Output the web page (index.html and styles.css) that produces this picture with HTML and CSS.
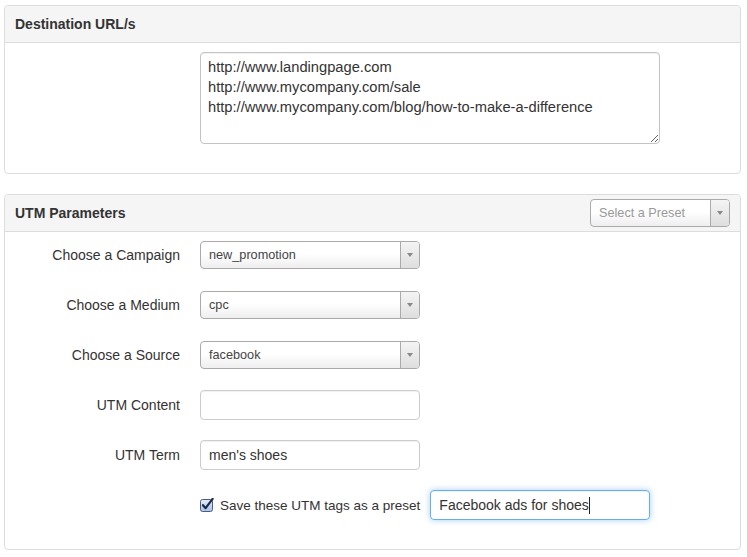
FILE: index.html
```html
<!DOCTYPE html>
<html>
<head>
<meta charset="utf-8">
<link rel="stylesheet" href="styles.css">
</head>
<body>
<div class="page">
  <section class="panel">
    <div class="panel-head">
      <h3 class="panel-title">Destination URL/s</h3>
    </div>
    <div class="panel-body body-urls">
      <div class="row">
        <div class="label"></div>
        <textarea class="urls">http://www.landingpage.com
http://www.mycompany.com/sale
http://www.mycompany.com/blog/how-to-make-a-difference</textarea>
      </div>
    </div>
  </section>

  <section class="panel">
    <div class="panel-head">
      <h3 class="panel-title">UTM Parameters</h3>
      <div class="sel sel-preset">
        <span class="sel-text placeholder">Select a Preset</span>
        <span class="sel-arrow"><span class="tri"></span></span>
      </div>
    </div>
    <div class="panel-body body-utm">
      <div class="row">
        <label class="label">Choose a Campaign</label>
        <div class="sel"><span class="sel-text">new_promotion</span><span class="sel-arrow"><span class="tri"></span></span></div>
      </div>
      <div class="row">
        <label class="label">Choose a Medium</label>
        <div class="sel"><span class="sel-text">cpc</span><span class="sel-arrow"><span class="tri"></span></span></div>
      </div>
      <div class="row">
        <label class="label">Choose a Source</label>
        <div class="sel"><span class="sel-text">facebook</span><span class="sel-arrow"><span class="tri"></span></span></div>
      </div>
      <div class="row">
        <label class="label">UTM Content</label>
        <input class="field" type="text" value="">
      </div>
      <div class="row">
        <label class="label">UTM Term</label>
        <input class="field" type="text" value="men's shoes">
      </div>
      <div class="row">
        <div class="label"></div>
        <div class="save-line">
          <span class="check">
            <svg width="14" height="14" viewBox="0 0 14 14">
              <defs>
                <linearGradient id="cb" x1="0" y1="0" x2="0" y2="1">
                  <stop offset="0" stop-color="#e6eefb"/>
                  <stop offset="1" stop-color="#a9c1e8"/>
                </linearGradient>
              </defs>
              <rect x="0.5" y="1.5" width="12" height="12" rx="2" fill="url(#cb)" stroke="#4a5d80"/>
              <path d="M3 7.2 L5.6 10.2 L12.6 0.8" fill="none" stroke="#1b2a4a" stroke-width="2.2" stroke-linecap="round" stroke-linejoin="round"/>
            </svg>
          </span>
          <span class="save-text">Save these UTM tags as a preset</span>
          <div class="field focused">Facebook ads for shoes<span class="caret"></span></div>
        </div>
      </div>
    </div>
  </section>
</div>
</body>
</html>
```

FILE: styles.css
```css
html, body {
  margin: 0;
  padding: 0;
  background: #fff;
}

body {
  font-family: "Liberation Sans", Arial, Helvetica, sans-serif;
  color: #333;
}

.page {
  padding: 5px 6px 0 4px;
}

.panel {
  border: 1px solid #ddd;
  border-radius: 4px;
  margin-bottom: 20px;
  background: #fff;
}

.panel-head {
  height: 36px;
  background: #f5f5f5;
  border-bottom: 1px solid #ddd;
  border-radius: 4px 4px 0 0;
  display: flex;
  align-items: center;
  justify-content: space-between;
  padding: 0 10px;
}

.panel-title {
  margin: 0;
  font-size: 14px;
  font-weight: bold;
  color: #333;
}

.body-urls {
  padding: 9px 15px 29px 15px;
}

.body-utm {
  padding: 8px 15px 29px 15px;
  display: flex;
  flex-direction: column;
  gap: 20px;
}

.row {
  display: grid;
  grid-template-columns: 160px auto;
  column-gap: 20px;
  align-items: center;
  justify-content: start;
  min-height: 30px;
}

.label {
  text-align: right;
  font-size: 14px;
  color: #333;
}

.urls {
  display: block;
  box-sizing: border-box;
  width: 460px;
  height: 92px;
  margin: 0;
  padding: 4px 7px;
  border: 1px solid #c4c4c4;
  border-radius: 4px;
  font-family: "Liberation Sans", Arial, sans-serif;
  font-size: 14.7px;
  line-height: 20px;
  color: #333;
  box-shadow: inset 0 1px 1px rgba(0,0,0,0.06);
  outline: none;
}

.sel {
  box-sizing: border-box;
  width: 220px;
  height: 28px;
  display: flex;
  border: 1px solid #aaa;
  border-radius: 4px;
  background: linear-gradient(#ffffff 0%, #ffffff 45%, #eeeeee 100%);
  font-size: 12.7px;
  color: #444;
  overflow: hidden;
}

.sel-preset {
  width: 140px;
}

.sel-text {
  flex: 1;
  padding-left: 8px;
  line-height: 26px;
  white-space: nowrap;
}

.placeholder {
  color: #999;
}

.sel-arrow {
  width: 18px;
  border-left: 1px solid #aaa;
  background: linear-gradient(#f4f4f4, #dedede);
  display: flex;
  align-items: center;
  justify-content: center;
}

.tri {
  width: 0;
  height: 0;
  border-left: 3px solid transparent;
  border-right: 3px solid transparent;
  border-top: 4px solid #888;
}

.field {
  box-sizing: border-box;
  width: 220px;
  height: 30px;
  margin: 0;
  padding: 0 8px;
  border: 1px solid #ccc;
  border-radius: 4px;
  font-family: "Liberation Sans", Arial, sans-serif;
  font-size: 14px;
  line-height: 28px;
  color: #333;
  background: #fff;
  box-shadow: inset 0 1px 1px rgba(0,0,0,0.06);
  outline: none;
}

.save-line {
  display: flex;
  align-items: center;
}

.check {
  display: flex;
  width: 14px;
  height: 14px;
  margin-right: 6px;
}

.save-text {
  font-size: 13.5px;
  color: #333;
  margin-right: 10px;
  white-space: nowrap;
}

.focused {
  border-color: #66afe9;
  box-shadow: 0 0 6px rgba(102,175,233,0.6), inset 0 1px 1px rgba(0,0,0,0.06);
  white-space: nowrap;
  display: flex;
  align-items: center;
}

.caret {
  display: inline-block;
  width: 1px;
  height: 17px;
  background: #222;
  margin-left: 0;
}
```
